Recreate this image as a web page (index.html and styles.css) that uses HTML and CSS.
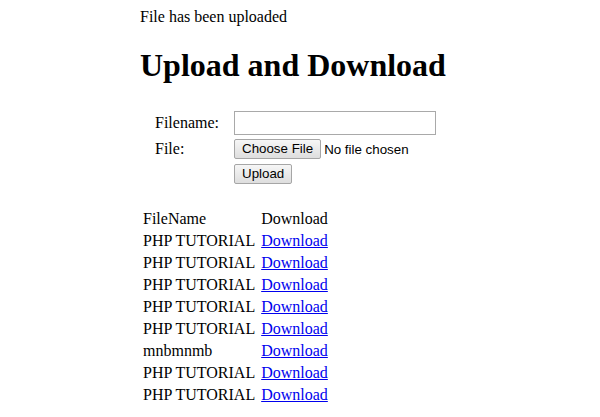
FILE: index.html
```html
<!DOCTYPE html>
<html>
<head>
<meta charset="utf-8">
<title>Upload and Download</title>
<link rel="stylesheet" href="styles.css">
</head>
<body>
<div class="page">
  <div class="msg">File has been uploaded</div>
  <h1 class="title">Upload and Download</h1>
  <form class="upload-form" onsubmit="return false">
    <table class="form-table">
      <tr>
        <td class="label">Filename:</td>
        <td><input class="text-input" type="text"></td>
      </tr>
      <tr>
        <td class="label">File:</td>
        <td><button class="btn" type="button">Choose File</button><span class="nofile">No file chosen</span></td>
      </tr>
      <tr>
        <td></td>
        <td><button class="btn" type="button">Upload</button></td>
      </tr>
    </table>
  </form>
  <table class="files">
    <tr><td class="name">FileName</td><td>Download</td></tr>
    <tr><td class="name">PHP TUTORIAL</td><td><a href="#">Download</a></td></tr>
    <tr><td class="name">PHP TUTORIAL</td><td><a href="#">Download</a></td></tr>
    <tr><td class="name">PHP TUTORIAL</td><td><a href="#">Download</a></td></tr>
    <tr><td class="name">PHP TUTORIAL</td><td><a href="#">Download</a></td></tr>
    <tr><td class="name">PHP TUTORIAL</td><td><a href="#">Download</a></td></tr>
    <tr><td class="name">mnbmnmb</td><td><a href="#">Download</a></td></tr>
    <tr><td class="name">PHP TUTORIAL</td><td><a href="#">Download</a></td></tr>
    <tr><td class="name">PHP TUTORIAL</td><td><a href="#">Download</a></td></tr>
  </table>
</div>
</body>
</html>
```
FILE: styles.css
```css
html, body {
  margin: 0;
  padding: 0;
  background: #fff;
}
body {
  font-family: "Liberation Serif", "Times New Roman", serif;
  font-size: 16px;
  color: #000;
}
.page {
  padding: 8px 8px 8px 140px;
}
.msg {
  line-height: 18px;
}
.title {
  font-size: 32px;
  font-weight: bold;
  margin: 21px 0 24px 0;
  line-height: 37px;
}
.upload-form {
  margin: 0;
}
.form-table {
  border-collapse: separate;
  border-spacing: 2px;
  margin-left: 12px;
}
.form-table td {
  padding: 1px;
  vertical-align: middle;
}
.form-table .label {
  width: 75px;
}
.text-input {
  box-sizing: border-box;
  width: 202px;
  height: 24px;
  margin: 0;
  border: 1px solid #a9a9a9;
  padding: 1px 2px;
  font-family: "Liberation Sans", Arial, sans-serif;
  font-size: 13.33px;
  display: block;
}
.btn {
  box-sizing: border-box;
  height: 20px;
  margin: 0;
  padding: 0 7px;
  border: 1px solid #a6a6a6;
  border-radius: 2px;
  background: linear-gradient(#f6f6f6, #dedede);
  font-family: "Liberation Sans", Arial, sans-serif;
  font-size: 13.33px;
  color: #000;
  line-height: 18px;
  vertical-align: middle;
}
.nofile {
  font-family: "Liberation Sans", Arial, sans-serif;
  font-size: 13.33px;
  margin-left: 3px;
  vertical-align: middle;
}
.files {
  border-collapse: separate;
  border-spacing: 2px;
  margin-top: 20px;
}
.files td {
  padding: 1px;
  line-height: 18px;
}
.files .name {
  padding-right: 3px;
}
.files a {
  color: #0000ee;
  text-decoration: underline;
}
```
